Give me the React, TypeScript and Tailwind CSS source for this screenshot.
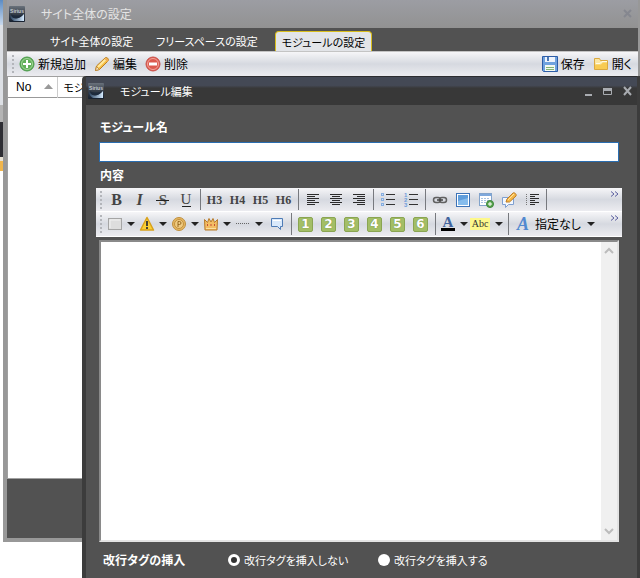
import React from 'react';
import clsx from 'clsx';

const SERIF = "font-['Liberation_Serif',serif]";

const Svg: React.FC<{ w?: number; h?: number; children: React.ReactNode }> = ({ w = 16, h = 16, children }) => (
  <svg width={w} height={h} viewBox={`0 0 ${w} ${h}`} fill="none" aria-hidden="true" className="shrink-0 overflow-visible">
    {children}
  </svg>
);

/* ---------- icons ---------- */

const AppIcon: React.FC<{ id: string }> = ({ id }) => (
  <Svg>
    <defs>
      <linearGradient id={`${id}-bg`} x1="0" y1="0" x2="0" y2="1">
        <stop offset="0" stopColor="#6a727c" />
        <stop offset="0.45" stopColor="#3a424d" />
        <stop offset="1" stopColor="#16202f" />
      </linearGradient>
      <linearGradient id={`${id}-arc`} x1="0" y1="0" x2="1" y2="0">
        <stop offset="0" stopColor="#28415f" />
        <stop offset="1" stopColor="#d5ebff" />
      </linearGradient>
    </defs>
    <rect width="16" height="16" rx="1" fill={`url(#${id}-bg)`} />
    <path d="M1 9c3 4 9 5 14-1v7H5c-2-1-4-3-4-6z" fill={`url(#${id}-arc)`} />
    <path d="M2 8c1 6 8 6 12 0-3 2-9 2-12 0z" fill="#1d2a3c" />
    <text x="8" y="7" textAnchor="middle" fontSize="5" fontWeight="700" fill="#c3cad2" fontFamily="Liberation Sans">
      Sirius
    </text>
  </Svg>
);

const AddIcon = () => (
  <Svg>
    <circle cx="8" cy="8" r="7" fill="#62b05a" stroke="#4a9a4a" />
    <circle cx="8" cy="8" r="5.5" fill="none" stroke="#a5d79b" />
    <path d="M8 4v8M4 8h8" stroke="#fff" strokeWidth="2" />
  </Svg>
);

const RemoveIcon = () => (
  <Svg>
    <circle cx="8" cy="8" r="7" fill="#dd5a4e" stroke="#c9514a" />
    <circle cx="8" cy="8" r="5.5" fill="none" stroke="#f1a59c" />
    <path d="M4 8h8" stroke="#fff" strokeWidth="3" />
  </Svg>
);

const PencilIcon = () => (
  <Svg>
    <path d="M1.5 14.5l1-4.500L11 2c1.500-1.500 4.500 1 3 3l-8.500 8.500z" fill="#f6bf45" stroke="#b87c22" />
    <path d="M4 11l8-8" stroke="#ffe9a0" strokeWidth="2" />
    <path d="M1.5 14.500l1-4 3 3z" fill="#f6e2c2" stroke="#b87c22" strokeWidth="0.700" />
    <path d="M10.500 3l3 3 1-2-2-2z" fill="#f0ad55" />
  </Svg>
);

const SaveIcon = () => (
  <Svg>
    <path d="M0.500 0.500h15v15h-14l-1-1z" fill="#6fa2de" stroke="#2d5ca6" />
    <rect x="3" y="1" width="10" height="5" fill="#eef4fc" />
    <rect x="5" y="1" width="2" height="4" fill="#4c78b5" />
    <rect x="3" y="9" width="10" height="6" fill="#f4f9f1" />
    <path d="M4 11.500h8M4 13.500h8" stroke="#83b573" />
  </Svg>
);

const FolderIcon = () => (
  <Svg>
    <path d="M1.500 13.500v-11h5l1 2h7v9z" fill="#fbe6a2" stroke="#dba93f" />
    <path d="M2 13V8.500h6L10 6.500h4V13z" fill="#f8cb52" />
    <path d="M3 7.500h4l2-2h5" stroke="#fffbe6" />
  </Svg>
);

const StrikeIcon = () => (
  <Svg>
    <text x="8" y="13" textAnchor="middle" fontSize="15" fontWeight="700" fill="#555" fontFamily="Liberation Serif">
      S
    </text>
    <path d="M1 8.500h13" stroke="#222" />
  </Svg>
);

const UnderlineIcon = () => (
  <Svg>
    <text x="8" y="12" textAnchor="middle" fontSize="15" fill="#444" fontFamily="Liberation Serif">
      U
    </text>
    <path d="M4 14.500h9" stroke="#222" />
  </Svg>
);

const AlignIcon: React.FC<{ kind: 'left' | 'center' | 'right' | 'indent' }> = ({ kind }) => {
  const widths = [12, 8, 12, 8, 12, 8];
  return (
    <Svg w={14}>
      {widths.map((w, i) => {
        const len = kind === 'indent' ? w - 3 : w;
        const x = kind === 'left' ? 1 : kind === 'center' ? 1 + (12 - w) / 2 : kind === 'right' ? 13 - w : 5;
        return <path key={i} d={`M${x} ${2.5 + i * 2}h${len}`} stroke="#2c2c2c" />;
      })}
      {kind === 'indent' && <path d="M1.500 2v12" stroke="#777" strokeDasharray="1 1" />}
    </Svg>
  );
};

const BulletIcon = () => (
  <Svg>
    {[3, 8, 13].map((y) => (
      <React.Fragment key={y}>
        <rect x="1.500" y={y - 1.5} width="2" height="2" fill="#cfe0f8" stroke="#86aee0" />
        <path d={`M6 ${y - 0.5}h9`} stroke="#333" />
      </React.Fragment>
    ))}
  </Svg>
);

const NumberListIcon = () => (
  <Svg>
    {[3, 8, 13].map((y, i) => (
      <React.Fragment key={y}>
        <text x="1" y={y + 2} fontSize="6" fontWeight="700" fill="#6e9ddb" fontFamily="Liberation Sans">
          {i + 1}
        </text>
        <path d={`M6 ${y - 0.5}h9`} stroke="#333" />
      </React.Fragment>
    ))}
  </Svg>
);

const LinkIcon = () => (
  <Svg>
    <rect x="1.500" y="5.500" width="7" height="5" rx="2.500" stroke="#606060" strokeWidth="1.500" />
    <rect x="7.500" y="5.500" width="7" height="5" rx="2.500" stroke="#606060" strokeWidth="1.500" />
    <path d="M5 8h6" stroke="#444" strokeWidth="1.500" />
  </Svg>
);

const ImageIcon = () => (
  <Svg>
    <rect x="1.500" y="1.500" width="13" height="13" fill="#fff" stroke="#3d73b7" />
    <rect x="3" y="3" width="10" height="10" fill="#5f9ddb" />
    <path d="M3 9l10-3v7H3z" fill="#86bcec" />
  </Svg>
);

const TableIcon = () => (
  <Svg>
    <rect x="1.500" y="1.500" width="12" height="12" fill="#fff" stroke="#82a3cb" />
    <path d="M2 3h11" stroke="#7ea8dc" strokeWidth="2" />
    <path d="M3 6.500h9M3 8.500h9M3 10.500h9" stroke="#a9c3e2" strokeDasharray="2 1" />
    <circle cx="12" cy="12" r="3.500" fill="#5ba64f" stroke="#3c853a" />
    <path d="M12 10v4M10 12h4" stroke="#fff" />
  </Svg>
);

const NoteIcon = () => (
  <Svg>
    <path d="M1.500 5.500h11v7h-5l-3 3v-3h-3z" fill="#f3f8ff" stroke="#7e9fd0" />
    <path d="M5 10l1-3 6-6c1-1 4 1 3 3L8.500 10z" fill="#f5b94a" stroke="#bf7d26" />
    <path d="M7 8l6-6" stroke="#ffe3a0" />
  </Svg>
);

const BoxIcon = () => (
  <Svg>
    <rect x="1.500" y="2.500" width="13" height="11" fill="#dddddd" stroke="#a5a5a5" />
    <path d="M3 12V4h10" stroke="#f2f2f2" />
  </Svg>
);

const WarningIcon = () => (
  <Svg>
    <path d="M8 1.500l6.500 12.500h-13z" fill="#fbd033" stroke="#d8a11c" strokeWidth="1.500" strokeLinejoin="round" />
    <path d="M8 5v5M8 11v2" stroke="#333" strokeWidth="1.800" />
  </Svg>
);

const CoinIcon = () => (
  <Svg>
    <circle cx="8" cy="8" r="6.500" fill="#e6b761" stroke="#bf8f3e" />
    <circle cx="8" cy="8" r="4.500" fill="#efcb82" stroke="#c4913d" />
    <path d="M7 11V5.500h1.500a1.500 1.500 0 0 1 0 3H7" stroke="#996a22" />
  </Svg>
);

const CrownIcon = () => (
  <Svg>
    <path d="M2 14L1.500 3.500l3 3L6 2.500l2 3.500 2-3.500 1.500 4 3-3L14 14z" fill="#f3bd63" stroke="#b87a29" />
    <path d="M3 12.500h10" stroke="#fbe0a0" />
    <path d="M4 9h1M7.500 9h1M11 9h1" stroke="#c74d35" strokeWidth="2" />
  </Svg>
);

const DottedIcon = () => (
  <Svg>
    <path d="M1 7.500h14" stroke="#666" strokeDasharray="1 1" />
  </Svg>
);

const CommentIcon = () => (
  <Svg>
    <path d="M2.500 2.500h11v8h-2v3l-3-3h-6z" fill="#d9e9fb" stroke="#4f7cb6" strokeLinejoin="round" />
    <path d="M4 4.500h8" stroke="#fff" />
  </Svg>
);

const FontColorIcon = () => (
  <Svg>
    <text x="8" y="11" textAnchor="middle" fontSize="15" fontWeight="700" fill="#40639d" fontFamily="Liberation Serif">
      A
    </text>
    <rect x="1" y="12" width="14" height="3" fill="#000" />
  </Svg>
);

const WindowButtons = () => (
  <div className="flex gap-2 text-[#a9acb1]">
    <button type="button" aria-label="最小化" className="h-3 w-3">
      <Svg w={12} h={12}>
        <path d="M3 10h7" stroke="currentColor" strokeWidth="2" />
      </Svg>
    </button>
    <button type="button" aria-label="最大化" className="h-3 w-3">
      <Svg w={12} h={12}>
        <path d="M1.500 4v5.500h8V4" stroke="currentColor" />
        <path d="M1 4.500h9" stroke="currentColor" strokeWidth="3" />
      </Svg>
    </button>
    <button type="button" aria-label="閉じる" className="h-3 w-3">
      <Svg w={12} h={12}>
        <path d="M2 2l7 8M9 2l-7 8" stroke="currentColor" strokeWidth="2" />
      </Svg>
    </button>
  </div>
);

/* ---------- toolbar parts ---------- */

const Grip = () => (
  <span className="flex w-[9px] shrink-0 flex-col items-center gap-[2px]">
    {[0, 1, 2, 3, 4].map((i) => (
      <span key={i} className="h-[2px] w-[2px] bg-[#b3b5ba]" />
    ))}
  </span>
);

const Separator = () => (
  <span className="flex w-[6px] shrink-0 justify-center self-stretch py-px">
    <span className="w-px bg-[#77797e]" />
  </span>
);

const Tool: React.FC<{ label: string; children: React.ReactNode }> = ({ label, children }) => (
  <button type="button" aria-label={label} className="flex h-5 w-[23px] shrink-0 items-center justify-center">
    {children}
  </button>
);

const Caret = () => (
  <span className="flex w-3 shrink-0 justify-center">
    <Svg w={8} h={4}>
      <path d="M0 0h8L4 4z" fill="#222" />
    </Svg>
  </span>
);

const DropTool: React.FC<{ label: string; children: React.ReactNode }> = ({ label, children }) => (
  <button type="button" aria-label={label} className="flex h-5 shrink-0 items-center">
    <span className="flex w-5 justify-center">{children}</span>
    <Caret />
  </button>
);

const Overflow = () => (
  <button type="button" aria-label="その他" className="ml-auto self-start px-[3px] pt-[3px]">
    <Svg w={9} h={7}>
      <path d="M1 0.500l3 2.500-3 2.500M5 0.500l3 2.500-3 2.500" stroke="#5b5fa0" />
    </Svg>
  </button>
);

const barStyle = 'flex items-center bg-linear-to-b from-[#f6f6f8] via-[#d6d9e0] to-[#ececf0]';

const EditorToolbar = () => (
  <div>
    <div className={clsx(barStyle, 'h-6 border-b border-white')}>
      <Grip />
      <Tool label="太字">
        <span className={clsx(SERIF, 'text-base font-bold text-[#444]')}>B</span>
      </Tool>
      <Tool label="斜体">
        <span className={clsx(SERIF, 'text-base font-bold text-[#444] italic')}>I</span>
      </Tool>
      <Tool label="取り消し線"><StrikeIcon /></Tool>
      <Tool label="下線"><UnderlineIcon /></Tool>
      <Separator />
      {['H3', 'H4', 'H5', 'H6'].map((h) => (
        <Tool key={h} label={h}>
          <span className={clsx(SERIF, 'text-xs font-bold text-[#444]')}>{h}</span>
        </Tool>
      ))}
      <Separator />
      <Tool label="左揃え"><AlignIcon kind="left" /></Tool>
      <Tool label="中央揃え"><AlignIcon kind="center" /></Tool>
      <Tool label="右揃え"><AlignIcon kind="right" /></Tool>
      <Separator />
      <Tool label="箇条書き"><BulletIcon /></Tool>
      <Tool label="番号付きリスト"><NumberListIcon /></Tool>
      <Separator />
      <Tool label="リンク"><LinkIcon /></Tool>
      <Tool label="画像"><ImageIcon /></Tool>
      <Tool label="表"><TableIcon /></Tool>
      <Tool label="注釈"><NoteIcon /></Tool>
      <Tool label="字下げ"><AlignIcon kind="indent" /></Tool>
      <Separator />
      <Overflow />
    </div>
    <div className={clsx(barStyle, 'h-[25px] border-b border-white')}>
      <Grip />
      <DropTool label="ボックス"><BoxIcon /></DropTool>
      <DropTool label="注意"><WarningIcon /></DropTool>
      <DropTool label="ポイント"><CoinIcon /></DropTool>
      <DropTool label="ランキング"><CrownIcon /></DropTool>
      <DropTool label="区切り線"><DottedIcon /></DropTool>
      <Tool label="吹き出し"><CommentIcon /></Tool>
      <Separator />
      {[1, 2, 3, 4, 5, 6].map((n) => (
        <Tool key={n} label={`定型文${n}`}>
          <span className="flex h-[15px] w-[15px] items-center justify-center rounded-[2px] border border-[#8aa552] bg-[#a3be66] font-['DejaVu_Sans',sans-serif] text-xs leading-3 font-bold text-white text-shadow-[0_0_1px_#5d7530]">
            {n}
          </span>
        </Tool>
      ))}
      <Separator />
      <DropTool label="文字色"><FontColorIcon /></DropTool>
      <button type="button" className="flex h-5 shrink-0 items-center gap-[3px]">
        <span className={clsx(SERIF, 'w-5 bg-[#fdf88c] text-center text-[10px] leading-3 text-[#333]')}>Abc</span>
        <Caret />
      </button>
      <Separator />
      <button type="button" className="flex h-5 shrink-0 items-center text-black">
        <span className={clsx(SERIF, 'w-6 text-center text-lg leading-5 font-bold text-[#5289d0] italic')}>A</span>
        <span className="pr-1">指定なし</span>
        <Caret />
      </button>
      <Overflow />
    </div>
  </div>
);

/* ---------- windows ---------- */

// Sliver of the application behind, left of the settings window
const Backdrop = () => (
  <div className="flex w-[3px] shrink-0 flex-col">
    <div className="h-[25px] bg-linear-to-b from-[#5c8cc4] to-[#c9d9ec]" />
    <div className="h-20 bg-[#dde0e5]" />
    <div className="h-[17px] bg-[#b4b4b4]" />
    <div className="h-[35px] bg-[#2d2d33]" />
    <div className="h-1 bg-[#e8e2d4]" />
    <div className="h-[10px] bg-[#f0b54c]" />
  </div>
);

const tabs = ['サイト全体の設定', 'フリースペースの設定', 'モジュールの設定'];

const SettingsWindow = () => (
  <section className="min-w-0 flex-1 border-r-2 border-b-4 border-l-4 border-[#989898] bg-[#525252]">
    <header className="flex h-7 items-center gap-4 bg-linear-to-b from-[#9c9da3] to-[#929292] pr-[5px] pl-[2px] text-[#e4e4e4]">
      <AppIcon id="main" />
      <h1>サイト全体の設定</h1>
      <button type="button" aria-label="閉じる" className="ml-auto text-[#85878f]">
        <Svg w={10} h={10}>
          <path d="M1 1l7 7M8 1L1 8" stroke="currentColor" strokeWidth="2" />
        </Svg>
      </button>
    </header>
    <nav className="flex h-[23px] items-end gap-[11px] pl-[37px] text-[11px] text-white">
      {tabs.map((tab, i) => (
        <button
          key={tab}
          type="button"
          className={clsx(
            'h-5 shrink-0 px-[6px] leading-5',
            i === 2 && 'rounded-t-sm border border-b-0 border-[#d8bd1c] bg-[#e2e4e8] text-black',
          )}
        >
          {tab}
        </button>
      ))}
    </nav>
    <div className={clsx(barStyle, 'h-[25px] border-t border-[#c4c4c4] pr-[6px] pl-px')}>
      <Grip />
      <button type="button" className="mr-2 ml-[2px] flex items-center gap-[3px]"><AddIcon />新規追加</button>
      <button type="button" className="mr-2 flex items-center gap-[3px]"><PencilIcon />編集</button>
      <button type="button" className="flex items-center gap-[3px]"><RemoveIcon />削除</button>
      <button type="button" className="ml-auto flex items-center gap-[3px]"><SaveIcon />保存</button>
      <button type="button" className="ml-2 flex items-center gap-[3px]"><FolderIcon />開く</button>
    </div>
    <div className="h-[403px] border border-[#a0a0a0] bg-white">
      <table className="w-full table-fixed border-collapse text-left">
        <thead>
          <tr className="h-5 border-b border-[#999]">
            <th className="w-[49px] border-r border-[#ccc] py-0 pr-1 pl-2 font-['Liberation_Sans',sans-serif] font-normal">
              <span className="flex items-center justify-between">
                No
                <Svg w={9} h={5}>
                  <path d="M0 5h9L4.500 0z" fill="#999" />
                </Svg>
              </span>
            </th>
            <th className="py-0 pl-[6px] text-[11px] font-normal">モジ</th>
          </tr>
        </thead>
      </table>
    </div>
    <div className="h-[59px]" />
  </section>
);

const radioStyle =
  'h-3 w-3 appearance-none rounded-full bg-white checked:border-[3px] checked:border-white checked:bg-[#333]';

const ModuleDialog = () => (
  <section
    role="dialog"
    aria-label="モジュール編集"
    className="absolute top-[76px] right-0 bottom-0 left-[82px] flex flex-col overflow-hidden rounded-tl-sm border-r-[3px] border-l-4 border-[#3c3c3c] bg-[#525252] text-white"
  >
    <header className="flex h-[29px] shrink-0 items-center gap-4 border-t border-[#2c2d30] bg-linear-to-b from-[#444955] from-30% to-[#383838] to-40% pr-[3px] pl-[2px]">
      <AppIcon id="dialog" />
      <h2 className="text-[11px]">モジュール編集</h2>
      <div className="ml-auto">
        <WindowButtons />
      </div>
    </header>
    <form className="flex min-h-0 flex-1 flex-col pr-[15px] pl-[10px]">
      <label htmlFor="module-name" className="mt-3 ml-1 leading-5 font-bold">モジュール名</label>
      <input id="module-name" type="text" className="mx-[3px] mt-[5px] h-5 border border-[#2a6db0] bg-white px-1 text-black outline-none" />
      <label htmlFor="module-body" className="mt-[3px] ml-1 leading-5 font-bold">内容</label>
      <div className="mt-[3px]">
        <EditorToolbar />
      </div>
      <div className="mx-[3px] mt-[3px] flex min-h-0 flex-1 border-2 border-t-[#8a8a8a] border-r-[#e3e3e3] border-b-[#e3e3e3] border-l-[#8a8a8a] bg-white">
        <textarea id="module-body" className="min-w-0 flex-1 resize-none bg-white p-1 text-black outline-none" />
        <div className="flex w-4 flex-col items-center justify-between bg-[#f0f0f0] py-[5px]">
          <Svg w={10} h={8}>
            <path d="M1 6l4-4 4 4" stroke="#bcbcbc" strokeWidth="2" />
          </Svg>
          <Svg w={10} h={8}>
            <path d="M1 2l4 4 4-4" stroke="#bcbcbc" strokeWidth="2" />
          </Svg>
        </div>
      </div>
      <div role="radiogroup" aria-labelledby="br-title" className="flex h-9 shrink-0 items-center pl-[7px] text-[11px]">
        <span id="br-title" className="w-[125px] text-xs font-bold">改行タグの挿入</span>
        <label className="flex w-[150px] items-center gap-1">
          <input type="radio" name="br" defaultChecked className={radioStyle} />
          改行タグを挿入しない
        </label>
        <label className="flex items-center gap-1">
          <input type="radio" name="br" className={radioStyle} />
          改行タグを挿入する
        </label>
      </div>
    </form>
  </section>
);

export default function App() {
  return (
    <main className="relative min-h-screen overflow-hidden bg-white font-['Noto_Sans_CJK_JP',sans-serif] text-xs leading-4 text-black [font-feature-settings:'palt']">
      <div className="flex">
        <Backdrop />
        <SettingsWindow />
      </div>
      <ModuleDialog />
    </main>
  );
}
